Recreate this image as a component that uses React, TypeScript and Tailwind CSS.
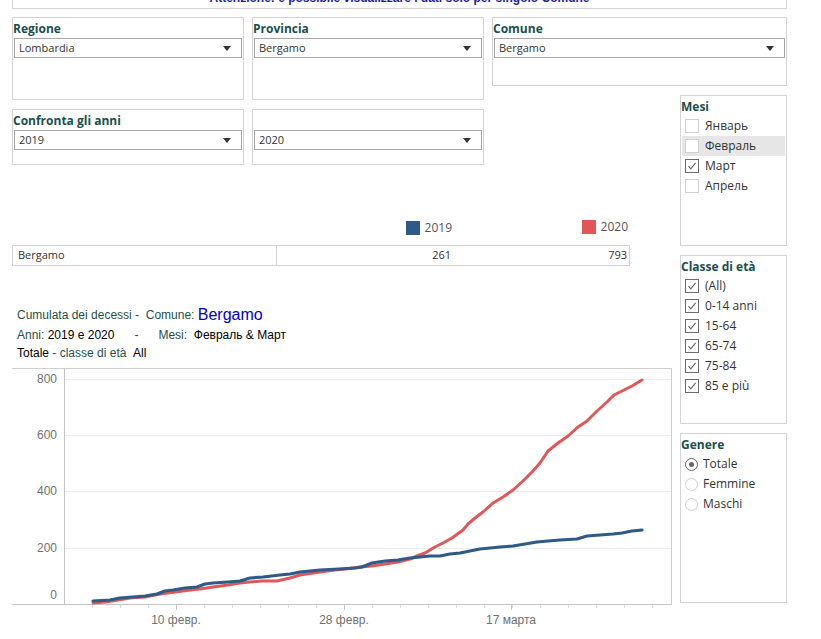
import React from 'react'

const ui = "font-['Open_Sans',sans-serif]"
const arial = "font-['Liberation_Sans',Arial,sans-serif]"

const blue = '#2e5a88'
const red = '#e15759'

const redLine = [
  [93, 603], [105, 602], [118, 600], [130, 598], [145, 597], [160, 594], [175, 592], [190, 590], [200, 589],
  [213, 587], [228, 585], [240, 583], [250, 582], [262, 581], [277, 581], [290, 578], [300, 575], [320, 572],
  [335, 570], [345, 569], [360, 567], [372, 566], [385, 564], [398, 562], [410, 559], [417, 556], [425, 553],
  [435, 547], [443, 543], [452, 538], [463, 530], [468, 524], [475, 518], [483, 512], [493, 503], [503, 497],
  [513, 490], [523, 481], [533, 471], [540, 463], [548, 451], [558, 443], [568, 436], [578, 427], [587, 421],
  [597, 411], [607, 402], [614, 395], [622, 391], [632, 386], [642, 380],
]

const blueLine = [
  [93, 601], [110, 600], [120, 598], [133, 597], [145, 596], [157, 594], [165, 591], [173, 590], [185, 588],
  [197, 587], [205, 584], [213, 583], [228, 582], [240, 581], [250, 578], [263, 577], [280, 575], [290, 574],
  [300, 572], [310, 571], [320, 570], [339, 569], [355, 568], [362, 567], [372, 563], [385, 561], [398, 560],
  [410, 558], [420, 557], [430, 556], [440, 556], [450, 554], [460, 553], [470, 551], [480, 549], [490, 548],
  [500, 547], [513, 546], [525, 544], [537, 542], [548, 541], [560, 540], [577, 539], [587, 536], [600, 535],
  [613, 534], [622, 533], [632, 531], [642, 530],
]

function Arrow() {
  return (
    <svg width="8" height="5" viewBox="0 0 8 5">
      <path d="M0 0 H8 L4 5 Z" fill="#333" />
    </svg>
  )
}

function Dropdown({ value }: { value: string }) {
  return (
    <div className="mx-[1px] mt-[1px] h-[20px] border border-[#a8a8a8] flex items-center justify-between pl-[4px] pr-[10px] text-[11px] text-[#333]">
      <span>{value}</span>
      <Arrow />
    </div>
  )
}

function Label({ text }: { text: string }) {
  return <div className="pt-[3px] h-[19px] text-[12px] leading-[15px] font-bold text-[#1a4f4b]">{text}</div>
}

function Check({ checked }: { checked: boolean }) {
  return (
    <span
      className={
        checked
          ? 'w-[14px] h-[14px] shrink-0 border border-[#6b6b6b] bg-white flex items-center justify-center'
          : 'w-[14px] h-[14px] shrink-0 border border-[#d0d0d0] bg-white'
      }
    >
      {checked && (
        <svg width="10" height="10" viewBox="0 0 10 10">
          <path d="M1.5 5.2 L3.8 7.8 L8.6 1.8" fill="none" stroke="#666" strokeWidth="1.1" />
        </svg>
      )}
    </span>
  )
}

function Radio({ on }: { on: boolean }) {
  return (
    <span
      className={
        on
          ? 'w-[13px] h-[13px] shrink-0 rounded-full border border-[#666] flex items-center justify-center'
          : 'w-[13px] h-[13px] shrink-0 rounded-full border border-[#cfcfcf]'
      }
    >
      {on && <span className="w-[5px] h-[5px] rounded-full bg-[#666]" />}
    </span>
  )
}

function Chart() {
  const minor: number[] = []
  for (let x = 92; x < 670; x += 28) minor.push(x)
  return (
    <svg width="660" height="264" viewBox="12 368 660 264" className="block mt-[7px]">
      {[379.5, 435.5, 491.5, 548.5].map((y) => (
        <line key={y} x1="65" x2="671" y1={y} y2={y} stroke="#ededed" />
      ))}
      <line x1="12" x2="672" y1="368.5" y2="368.5" stroke="#cfcfcf" />
      <line x1="671.5" x2="671.5" y1="368" y2="604" stroke="#cfcfcf" />
      <line x1="64.5" x2="64.5" y1="368" y2="605" stroke="#c4c4c4" />
      <line x1="12" x2="672" y1="604.5" y2="604.5" stroke="#c4c4c4" />
      {minor.map((x) => (
        <line key={x} x1={x + 0.5} x2={x + 0.5} y1="605" y2="608" stroke="#dcdcdc" />
      ))}
      {[176, 344, 511].map((x) => (
        <line key={x} x1={x + 0.5} x2={x + 0.5} y1="605" y2="610" stroke="#c4c4c4" />
      ))}
      {[
        ['800', 379],
        ['600', 435],
        ['400', 491],
        ['200', 548],
        ['0', 595],
      ].map(([t, y]) => (
        <text key={t} x="57" y={Number(y) + 4} textAnchor="end" fontSize="12" fill="#707070">
          {t}
        </text>
      ))}
      {[
        ['10 февр.', 176],
        ['28 февр.', 344],
        ['17 марта', 511],
      ].map(([t, x]) => (
        <text key={t} x={x} y="624" textAnchor="middle" fontSize="12" fill="#707070">
          {t}
        </text>
      ))}
      <polyline points={redLine.map((p) => p.join(',')).join(' ')} fill="none" stroke={red} strokeWidth="3" strokeLinejoin="round" strokeLinecap="round" />
      <polyline points={blueLine.map((p) => p.join(',')).join(' ')} fill="none" stroke={blue} strokeWidth="3.2" strokeLinejoin="round" strokeLinecap="round" />
    </svg>
  )
}

export default function App() {
  const mesi = [
    { t: 'Январь', c: false, hi: false },
    { t: 'Февраль', c: false, hi: true },
    { t: 'Март', c: true, hi: false },
    { t: 'Апрель', c: false, hi: false },
  ]
  const classi = ['(All)', '0-14 anni', '15-64', '65-74', '75-84', '85 e più']
  const generi = ['Totale', 'Femmine', 'Maschi']

  return (
    <div className={`w-[821px] h-[639px] overflow-hidden bg-white ${ui}`}>
      <div className="ml-[12px] w-[775px] h-[9px] border-x border-b border-[#d4d4d4] overflow-hidden">
        <div className={`-mt-[9px] text-center text-[12px] leading-[14px] font-bold text-[#1c1ca0] ${arial}`}>
          Attenzione: è possibile visualizzare i dati solo per singolo Comune
        </div>
      </div>

      <div className="ml-[12px] mt-[8px] grid grid-cols-[232px_232px_180px_107px] grid-rows-[69px_9px_5px_9px_56px_auto] gap-x-2">
        <div className="col-start-1 row-start-1 row-span-3 border border-[#d4d4d4]">
          <Label text="Regione" />
          <Dropdown value="Lombardia" />
        </div>
        <div className="col-start-2 row-start-1 row-span-3 border border-[#d4d4d4]">
          <Label text="Provincia" />
          <Dropdown value="Bergamo" />
        </div>
        <div className="col-start-3 col-span-2 row-start-1 border border-[#d4d4d4]">
          <Label text="Comune" />
          <Dropdown value="Bergamo" />
        </div>

        <div className="col-start-1 row-start-5 border border-[#d4d4d4]">
          <Label text="Confronta gli anni" />
          <Dropdown value="2019" />
        </div>
        <div className="col-start-2 row-start-5 border border-[#d4d4d4]">
          <Label text="" />
          <Dropdown value="2020" />
        </div>

        <div className="col-start-4 row-start-3 row-span-4 flex flex-col gap-[9px]">
          <div className="h-[151px] border border-[#d4d4d4]">
            <Label text="Mesi" />
            <div className="mt-[1px]">
              {mesi.map((m) => (
                <div key={m.t} className={`mx-[1px] h-[20px] pl-[3px] flex items-center gap-[6px] text-[12px] text-[#333] ${m.hi ? 'bg-[#e6e6e6]' : ''}`}>
                  <Check checked={m.c} />
                  <span>{m.t}</span>
                </div>
              ))}
            </div>
          </div>
          <div className="h-[169px] border border-[#d4d4d4]">
            <Label text="Classe di età" />
            <div className="mt-[1px]">
              {classi.map((c) => (
                <div key={c} className="mx-[1px] h-[20px] pl-[3px] flex items-center gap-[6px] text-[12px] text-[#333]">
                  <Check checked />
                  <span>{c}</span>
                </div>
              ))}
            </div>
          </div>
          <div className="h-[170px] border border-[#d4d4d4]">
            <Label text="Genere" />
            <div className="mt-[1px]">
              {generi.map((g, i) => (
                <div key={g} className="mx-[1px] h-[20px] pl-[3px] flex items-center gap-[5px] text-[12px] text-[#333]">
                  <Radio on={i === 0} />
                  <span>{g}</span>
                </div>
              ))}
            </div>
          </div>
        </div>

        <div className="col-start-1 col-span-3 row-start-6">
          <div className="mt-[53px] h-[16px] w-[618px] grid grid-cols-[265px_176px_177px] text-[12px] text-[#555]">
            <div />
            <div className="flex items-center justify-end gap-[5px] pr-[1px] mt-[1px]">
              <span className="w-[14px] h-[14px] bg-[#2e5a88]" />
              <span>2019</span>
            </div>
            <div className="flex items-center justify-end gap-[5px] pr-[2px] -mt-[1px]">
              <span className="w-[14px] h-[14px] bg-[#e15759]" />
              <span>2020</span>
            </div>
          </div>

          <div className="mt-[11px] h-[21px] w-[618px] border border-[#d4d4d4] grid grid-cols-[264px_176px_176px] text-[11px] text-[#333]">
            <div className="border-r border-[#d4d4d4] pl-[5px] flex items-center">Bergamo</div>
            <div className="flex items-center justify-end pr-[2px]">261</div>
            <div className="flex items-center justify-end pr-[2px]">793</div>
          </div>

          <div className={`mt-[39px] pl-[5px] text-[12px] ${arial}`}>
            <div className="h-[20px] flex items-end text-[#1f4f4a]">
              <span className="pb-[1px]">Cumulata dei decessi -&nbsp; Comune:&nbsp;</span>
              <span className="text-[16px] leading-[20px] text-[#0000cc]">Bergamo</span>
            </div>
            <div className="h-[19px] flex items-center whitespace-pre">
              <span className="text-[#1f4f4a]">Anni: </span>
              <span className="text-black">2019 e 2020</span>
              <span className="text-[#1f4f4a]">{'      -      Mesi:  '}</span>
              <span className="text-black">Февраль &amp; Март</span>
            </div>
            <div className="h-[18px] flex items-center whitespace-pre">
              <span className="text-black">Totale</span>
              <span className="text-[#1f4f4a]"> - classe di età  </span>
              <span className="text-black">All</span>
            </div>
          </div>

          <div className={`-mt-[1px] ${arial}`}>
            <Chart />
          </div>
        </div>
      </div>
    </div>
  )
}
